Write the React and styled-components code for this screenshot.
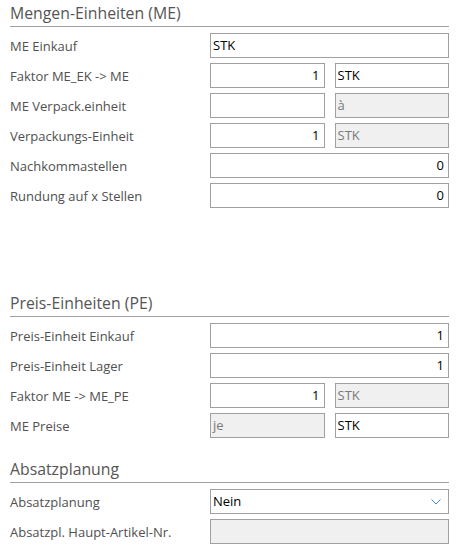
import React from 'react';
import styled, { createGlobalStyle } from 'styled-components';

const GlobalStyle = createGlobalStyle`
  body {
    margin: 0;
    background: #ffffff;
    font-family: "Segoe UI", "Open Sans", "Noto Sans", sans-serif;
  }
`;

const Page = styled.div`
  width: 460px;
  height: 555px;
  padding: 0 11px 0 10px;
  box-sizing: border-box;
  overflow: hidden;
`;

const Section = styled.section`
  margin-top: ${(p) => p.$top || 0}px;
`;

const SectionTitle = styled.h2`
  margin: 0;
  height: 26px;
  line-height: 26px;
  font-size: 15.8px;
  font-weight: 400;
  color: #555555;
  border-bottom: 1px solid #a0a0a0;
`;

const Rows = styled.div`
  display: flex;
  flex-direction: column;
  gap: 5px;
  padding-top: 6px;
`;

const Row = styled.div`
  display: grid;
  grid-template-columns: 200px 1fr;
  align-items: center;
  height: 25px;
`;

const Label = styled.span`
  font-size: 13px;
  color: #505050;
  white-space: nowrap;
`;

const Fields = styled.div`
  display: grid;
  grid-template-columns: ${(p) => (p.$split ? '1fr 1fr' : '1fr')};
  gap: 10px;
`;

const Field = styled.div`
  position: relative;
  height: 25px;
  box-sizing: border-box;
  border: 1px solid #a0a0a0;
  background: ${(p) => (p.$disabled ? '#f0f0f0' : '#ffffff')};
  color: ${(p) => (p.$disabled ? '#7a7a7a' : '#000000')};
  font-size: 13px;
  line-height: 23px;
  padding: 0 4px 0 2px;
  text-align: ${(p) => (p.$right ? 'right' : 'left')};
  white-space: nowrap;
  overflow: hidden;
`;

const Chevron = styled.svg`
  position: absolute;
  right: 7px;
  top: 9px;
`;

const Select = ({ value }) => (
  <Field>
    {value}
    <Chevron width="10" height="6" viewBox="0 0 10 6">
      <path d="M0.5 0.5 L5 5 L9.5 0.5" fill="none" stroke="#3c8ad8" strokeWidth="1" />
    </Chevron>
  </Field>
);

const App = () => (
  <Page>
    <GlobalStyle />
    <Section>
      <SectionTitle>Mengen-Einheiten (ME)</SectionTitle>
      <Rows>
        <Row>
          <Label>ME Einkauf</Label>
          <Fields>
            <Field>STK</Field>
          </Fields>
        </Row>
        <Row>
          <Label>Faktor ME_EK -&gt; ME</Label>
          <Fields $split>
            <Field $right>1</Field>
            <Field>STK</Field>
          </Fields>
        </Row>
        <Row>
          <Label>ME Verpack.einheit</Label>
          <Fields $split>
            <Field />
            <Field $disabled>à</Field>
          </Fields>
        </Row>
        <Row>
          <Label>Verpackungs-Einheit</Label>
          <Fields $split>
            <Field $right>1</Field>
            <Field $disabled>STK</Field>
          </Fields>
        </Row>
        <Row>
          <Label>Nachkommastellen</Label>
          <Fields>
            <Field $right>0</Field>
          </Fields>
        </Row>
        <Row>
          <Label>Rundung auf x Stellen</Label>
          <Fields>
            <Field $right>0</Field>
          </Fields>
        </Row>
      </Rows>
    </Section>

    <Section $top={82}>
      <SectionTitle>Preis-Einheiten (PE)</SectionTitle>
      <Rows>
        <Row>
          <Label>Preis-Einheit Einkauf</Label>
          <Fields>
            <Field $right>1</Field>
          </Fields>
        </Row>
        <Row>
          <Label>Preis-Einheit Lager</Label>
          <Fields>
            <Field $right>1</Field>
          </Fields>
        </Row>
        <Row>
          <Label>Faktor ME -&gt; ME_PE</Label>
          <Fields $split>
            <Field $right>1</Field>
            <Field $disabled>STK</Field>
          </Fields>
        </Row>
        <Row>
          <Label>ME Preise</Label>
          <Fields $split>
            <Field $disabled>je</Field>
            <Field>STK</Field>
          </Fields>
        </Row>
      </Rows>
    </Section>

    <Section $top={18}>
      <SectionTitle>Absatzplanung</SectionTitle>
      <Rows>
        <Row>
          <Label>Absatzplanung</Label>
          <Fields>
            <Select value="Nein" />
          </Fields>
        </Row>
        <Row>
          <Label>Absatzpl. Haupt-Artikel-Nr.</Label>
          <Fields>
            <Field $disabled />
          </Fields>
        </Row>
      </Rows>
    </Section>
  </Page>
);

export default App;
